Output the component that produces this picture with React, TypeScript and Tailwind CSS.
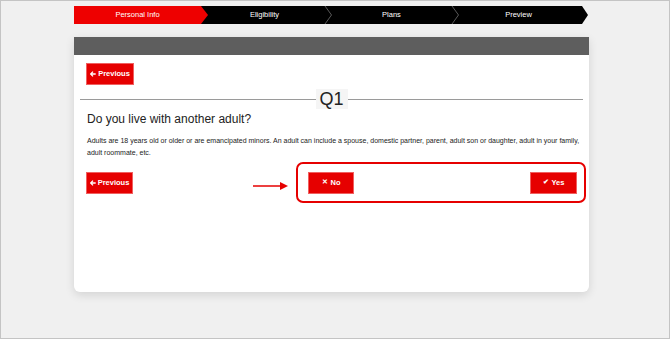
import React from "react";

const font = { fontFamily: '"Liberation Sans", Arial, sans-serif' };

function Chevron({ className }: { className: string }) {
  return (
    <svg className={`absolute top-0 z-10 ${className}`} width="9" height="18" viewBox="0 0 9 18">
      <polyline points="1,0 7.5,9 1,18" fill="none" stroke="#5a5a5a" strokeWidth="1" />
    </svg>
  );
}

function RedButton({ children, className = "" }: { children: React.ReactNode; className?: string }) {
  return (
    <div
      className={`flex h-[20px] items-center justify-center bg-[#e60000] text-[7.5px] font-bold text-white shadow-[0_0_0_1px_#f06060] ${className}`}
    >
      {children}
    </div>
  );
}

function ArrowLeft() {
  return (
    <svg width="6" height="6" viewBox="0 0 10 10" className="mr-[2px]">
      <path d="M5 1 L1 5 L5 9 M1 5 H9.5" fill="none" stroke="white" strokeWidth="2.2" />
    </svg>
  );
}

export default function App() {
  return (
    <div
      className="h-[339px] w-[670px] border border-[#c4c4c4] bg-[#f0f0f0] pl-[73px] pt-[5px]"
      style={font}
    >
      {/* Steps bar */}
      <div className="relative flex h-[18px] w-[515px] text-[7.5px] text-white">
        <div className="relative flex w-[127px] items-center justify-center bg-[#ee0000]">
          Personal Info
          <div className="absolute right-[-7px] top-0 z-20 h-0 w-0 border-y-[9px] border-l-[7px] border-y-transparent border-l-[#ee0000]" />
        </div>
        <div className="relative flex w-[127px] items-center justify-center bg-black">Eligibility</div>
        <div className="relative flex w-[127px] items-center justify-center bg-black">Plans</div>
        <div className="relative flex w-[127px] items-center justify-center bg-black">
          Preview
          <div className="absolute right-[-6px] top-0 h-0 w-0 border-y-[9px] border-l-[6px] border-y-transparent border-l-black" />
        </div>
        <Chevron className="left-[250px]" />
        <Chevron className="left-[377px]" />
      </div>

      {/* Card */}
      <div className="mt-[13px] h-[255px] w-[515px] overflow-hidden rounded-b-[6px] bg-white shadow-[0_3px_10px_rgba(0,0,0,0.12)]">
        <div className="h-[18px] bg-[#5e5e5e]" />
        <div className="px-[13px] pt-[9px]">
          <RedButton className="w-[46px]">
            <ArrowLeft />
            Previous
          </RedButton>

          <div className="relative mx-[-7px] mt-[5px] flex h-[20px] items-center">
            <div className="h-px flex-1 bg-[#9a9a9a]" />
            <div className="flex h-[20px] w-[32px] items-center justify-center bg-[#f5f5f5] text-[18px] leading-none text-[#222]">
              Q1
            </div>
            <div className="h-px flex-1 bg-[#9a9a9a]" />
          </div>

          <div className="mt-[3px] text-[12px] leading-[15px] text-[#222]">Do you live with another adult?</div>

          <div className="mr-[-10px] mt-[8px] text-[7px] leading-[12px] text-[#222]">
            Adults are 18 years old or older or are emancipated minors. An adult can include a spouse, domestic partner, parent, adult son or daughter, adult in your family, adult roommate, etc.
          </div>

          <div className="mt-[3px] flex items-center justify-between">
            <RedButton className="w-[45px]">
              <ArrowLeft />
              Previous
            </RedButton>
            <div className="mr-[-10px] flex items-center">
              <svg width="36" height="8" viewBox="0 0 36 8" className="mr-[7px] mt-[6px]">
                <line x1="0" y1="4" x2="30" y2="4" stroke="#e60000" strokeWidth="1.6" />
                <polygon points="27,0 35,4 27,8" fill="#e60000" />
              </svg>
              <div className="flex h-[41px] w-[290px] items-center justify-between rounded-[7px] border-2 border-[#e60000] pl-[11px] pr-[8px]">
                <RedButton className="w-[44px]">
                  <span className="mr-[3px] text-[7px]">✕</span>No
                </RedButton>
                <RedButton className="w-[45px]">
                  <span className="mr-[3px] text-[7px]">✔</span>Yes
                </RedButton>
              </div>
            </div>
          </div>
        </div>
      </div>
    </div>
  );
}
